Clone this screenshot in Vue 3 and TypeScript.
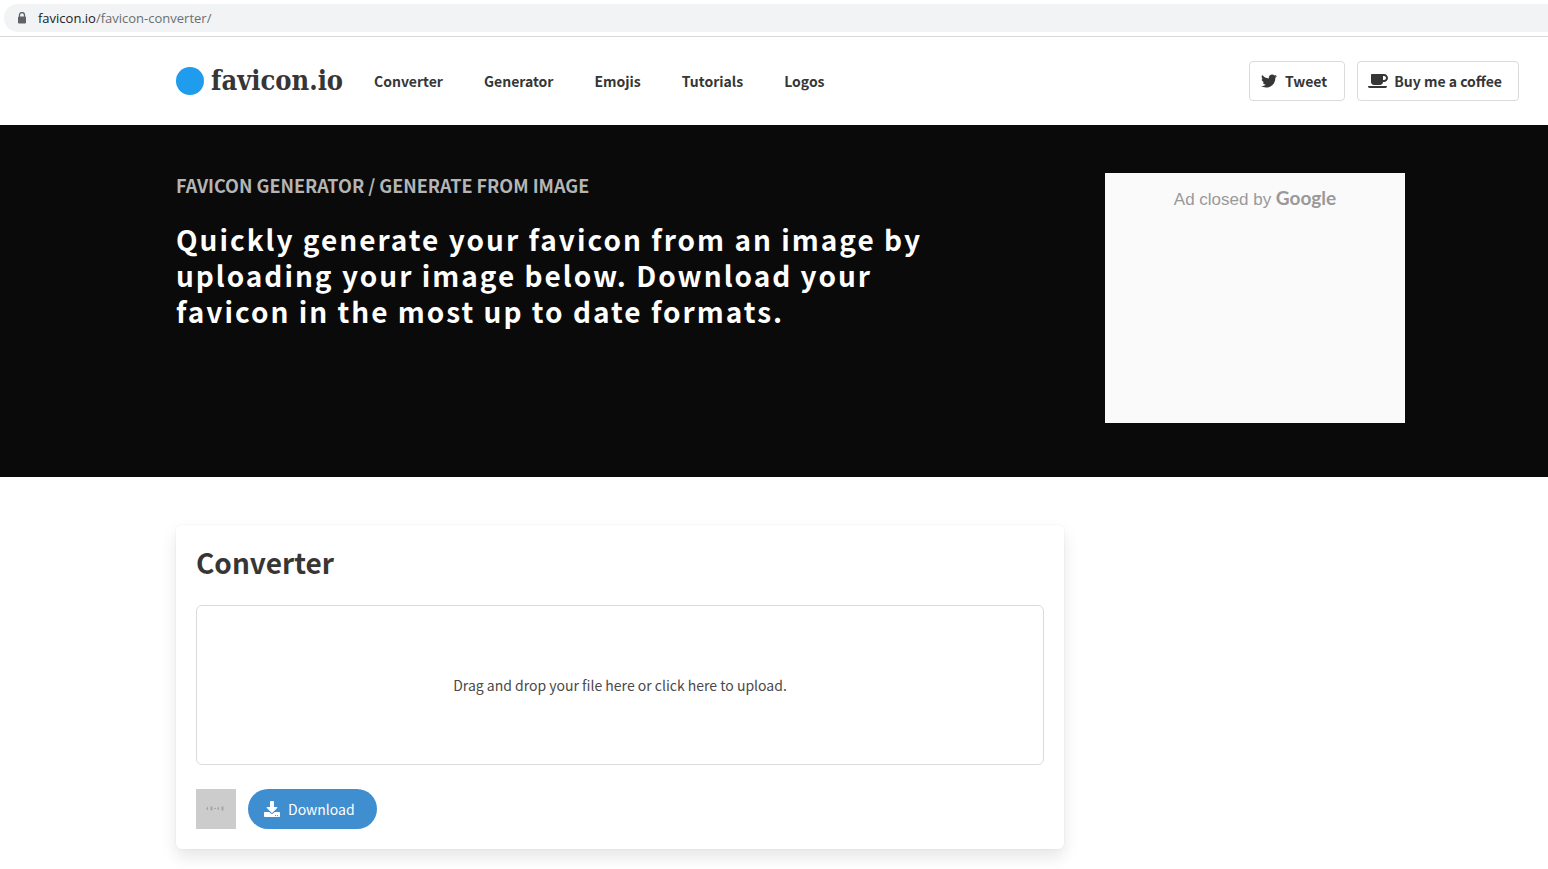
<script setup lang="ts">
import { ref } from 'vue'

interface NavLink {
  label: string
  href: string
}

const links: NavLink[] = [
  { label: 'Converter', href: '#converter' },
  { label: 'Generator', href: '#generator' },
  { label: 'Emojis', href: '#emojis' },
  { label: 'Tutorials', href: '#tutorials' },
  { label: 'Logos', href: '#logos' },
]

const prompt = 'Drag and drop your file here or click here to upload.'
const fileName = ref('')

function onFile(event: Event): void {
  const input = event.target as HTMLInputElement
  fileName.value = input.files?.[0]?.name ?? ''
}

function onDrop(event: DragEvent): void {
  fileName.value = event.dataTransfer?.files[0]?.name ?? ''
}
</script>

<template>
  <div class="page">
    <div class="browser-bar">
      <div class="address">
        <svg class="lock" viewBox="0 0 10 12" aria-hidden="true">
          <path d="M2.500 5V3a2.500 2.500 0 0 1 5 0v2" fill="none" stroke="#5f6368" stroke-width="1.3" />
          <rect x="1" y="4.5" width="8" height="7" rx="1" fill="#5f6368" />
        </svg>
        <span class="url"><span class="host">favicon.io</span>/favicon-converter/</span>
      </div>
    </div>

    <header class="header">
      <a class="brand" href="#home">
        <span class="dot"></span>
        <span class="brand-name">favicon.io</span>
      </a>
      <nav class="nav">
        <a v-for="link in links" :key="link.label" :href="link.href">{{ link.label }}</a>
      </nav>
      <div class="actions">
        <a class="action tweet" href="#tweet">
          <svg class="twitter-icon" viewBox="0 0 512 512" aria-hidden="true">
            <path fill="currentColor" d="M459.37 151.716c.325 4.548.325 9.097.325 13.645 0 138.72-105.583 298.558-298.558 298.558-59.452 0-114.68-17.219-161.137-47.106 8.447.974 16.568 1.299 25.34 1.299 49.055 0 94.213-16.568 130.274-44.832-46.132-.975-84.792-31.188-98.112-72.772 6.498.974 12.995 1.624 19.818 1.624 9.421 0 18.843-1.3 27.614-3.573-48.081-9.747-84.143-51.98-84.143-102.985v-1.299c13.969 7.797 30.214 12.67 47.431 13.319-28.264-18.843-46.781-51.005-46.781-87.391 0-19.492 5.197-37.36 14.294-52.954 51.655 63.675 129.3 105.258 216.365 109.807-1.624-7.797-2.599-15.918-2.599-24.04 0-57.828 46.782-104.934 104.934-104.934 30.213 0 57.502 12.67 76.67 33.137 23.715-4.548 46.456-13.32 66.599-25.34-7.798 24.366-24.366 44.833-46.132 57.827 21.117-2.273 41.584-8.122 60.426-16.243-14.292 20.791-32.161 39.308-52.628 54.253z" />
          </svg>
          Tweet
        </a>
        <a class="action coffee" href="#coffee">
          <svg class="coffee-icon" viewBox="0 0 640 512" aria-hidden="true">
            <path fill="currentColor" d="M192 384h192c53 0 96-43 96-96h32c70.600 0 128-57.400 128-128S582.600 32 512 32H120c-13.300 0-24 10.700-24 24v232c0 53 43 96 96 96zM512 96c35.300 0 64 28.700 64 64s-28.700 64-64 64h-32V96h32zm47.700 384H48.300c-47.600 0-61-64-36-64h583.300c25 0 11.800 64-35.900 64z" />
          </svg>
          Buy me a coffee
        </a>
      </div>
    </header>

    <section class="hero">
      <div class="hero-copy">
        <h2 class="kicker">FAVICON GENERATOR / GENERATE FROM IMAGE</h2>
        <h1 class="headline">
          Quickly generate your favicon from an image by uploading your image below. Download your
          favicon in the most up to date formats.
        </h1>
      </div>
      <aside class="ad">Ad closed by <span class="google">Google</span></aside>
    </section>

    <main class="content">
      <section id="converter" class="card">
        <h2 class="card-title">Converter</h2>
        <label class="dropzone" @dragover.prevent @drop.prevent="onDrop">
          <input class="file" type="file" accept="image/*" @change="onFile" />
          <span>{{ fileName || prompt }}</span>
        </label>
        <div class="card-footer">
          <svg class="preview" viewBox="0 0 40 40" role="img" aria-label="Preview">
            <rect width="40" height="40" fill="#cccccc" />
            <path fill="#a6a6a6" d="M10 19.500l2-2v4zM14.500 17.500h2v4h-2zM18 19h2v1h-2zM21 19.500l2-2v4zM25.500 17.500h2v4h-2z" />
          </svg>
          <button class="download" type="button">
            <svg class="download-icon" viewBox="0 0 512 512" aria-hidden="true">
              <path fill="currentColor" d="M216 0h80c13.300 0 24 10.700 24 24v168h87.700c17.800 0 26.700 21.500 14.100 34.100L269.700 378.300c-7.500 7.500-19.800 7.500-27.300 0L90.100 226.100c-12.600-12.600-3.700-34.100 14.100-34.100H192V24c0-13.300 10.700-24 24-24zm296 376v112c0 13.300-10.700 24-24 24H24c-13.300 0-24-10.700-24-24V376c0-13.300 10.700-24 24-24h146.700l49 49c20.100 20.100 52.500 20.100 72.600 0l49-49H488c13.300 0 24 10.700 24 24zm-124 88c0-11-9-20-20-20s-20 9-20 20 9 20 20 20 20-9 20-20zm64 0c0-11-9-20-20-20s-20 9-20 20 9 20 20 20 20-9 20-20z" />
            </svg>
            Download
          </button>
        </div>
      </section>
    </main>
  </div>
</template>

<style>
body {
  margin: 0;
  background: #ffffff;
}
</style>

<style scoped>
.page {
  color: #363636;
  font-family: "Noto Sans CJK JP", "Noto Sans", sans-serif;
  font-size: 14px;
  line-height: 24px;
}

.page * {
  box-sizing: border-box;
}

h1,
h2 {
  margin: 0;
}

a {
  color: inherit;
  text-decoration: none;
}

.browser-bar {
  padding: 4px 0 4px 4px;
  border-bottom: 1px solid #d5d7da;
}

.address {
  display: flex;
  align-items: center;
  gap: 11px;
  height: 28px;
  padding-left: 13px;
  border-radius: 14px 0 0 14px;
  background: #f1f3f4;
  color: #6b6f73;
  font-family: "Open Sans", "Noto Sans", sans-serif;
  font-size: 13px;
}

.lock {
  width: 10px;
  height: 12px;
}

.host {
  color: #202124;
}

.header {
  display: flex;
  align-items: center;
  height: 88px;
  padding: 0 29px 0 176px;
}

.brand {
  display: flex;
  align-items: center;
  gap: 7px;
  width: 166px;
}

.dot {
  flex: none;
  width: 28px;
  height: 28px;
  border-radius: 50%;
  background: #209cee;
}

.brand-name {
  font-family: "DejaVu Serif Condensed", "DejaVu Serif", serif;
  font-size: 27px;
  font-weight: 700;
  line-height: 32px;
}

.nav {
  display: flex;
  gap: 41px;
  margin-left: 32px;
  font-weight: 700;
}

.actions {
  display: flex;
  gap: 12px;
  margin-left: auto;
  font-weight: 700;
}

.action {
  display: flex;
  align-items: center;
  height: 40px;
  border: 1px solid #dbdbdb;
  border-radius: 4px;
  white-space: nowrap;
}

.tweet {
  gap: 8px;
  padding: 0 17px 0 11px;
}

.coffee {
  gap: 6px;
  padding: 0 16px 0 10px;
}

.twitter-icon {
  width: 16px;
  height: 16px;
}

.coffee-icon {
  width: 20px;
  height: 16px;
}

.hero {
  display: grid;
  grid-template-columns: minmax(0, 1fr) 300px;
  gap: 40px;
  padding: 48px 143px 54px 176px;
  background: #0a0a0a;
}

.kicker {
  color: #b5b5b5;
  font-size: 18px;
  line-height: 24px;
}

.headline {
  max-width: 780px;
  margin-top: 24px;
  color: #ffffff;
  font-size: 28px;
  letter-spacing: 2px;
  line-height: 36px;
}

.ad {
  height: 250px;
  padding-top: 13px;
  background: #fafafa;
  color: #999999;
  font-family: "Liberation Sans", Arial, sans-serif;
  font-size: 17px;
  text-align: center;
}

.google {
  font-family: Lato, sans-serif;
  font-size: 19px;
  font-weight: 700;
}

.content {
  padding: 48px 143px 48px 176px;
}

.card {
  max-width: 888px;
  padding: 20px;
  border-radius: 6px;
  box-shadow: 0 8px 16px rgba(10, 10, 10, 0.1), 0 0 0 1px rgba(10, 10, 10, 0.02);
}

.card-title {
  font-size: 28px;
  line-height: 34px;
}

.dropzone {
  display: flex;
  align-items: center;
  justify-content: center;
  height: 160px;
  margin-top: 26px;
  border: 1px solid #dbdbdb;
  border-radius: 6px;
  color: #4a4a4a;
  cursor: pointer;
}

.file {
  position: absolute;
  width: 1px;
  height: 1px;
  opacity: 0;
}

.card-footer {
  display: flex;
  gap: 12px;
  margin-top: 24px;
}

.preview {
  width: 40px;
  height: 40px;
}

.download {
  display: flex;
  align-items: center;
  gap: 8px;
  height: 40px;
  padding: 0 22px 0 16px;
  border: 0;
  border-radius: 20px;
  background: #3e8ed0;
  color: #ffffff;
  font: inherit;
  cursor: pointer;
}

.download-icon {
  width: 16px;
  height: 16px;
}
</style>
